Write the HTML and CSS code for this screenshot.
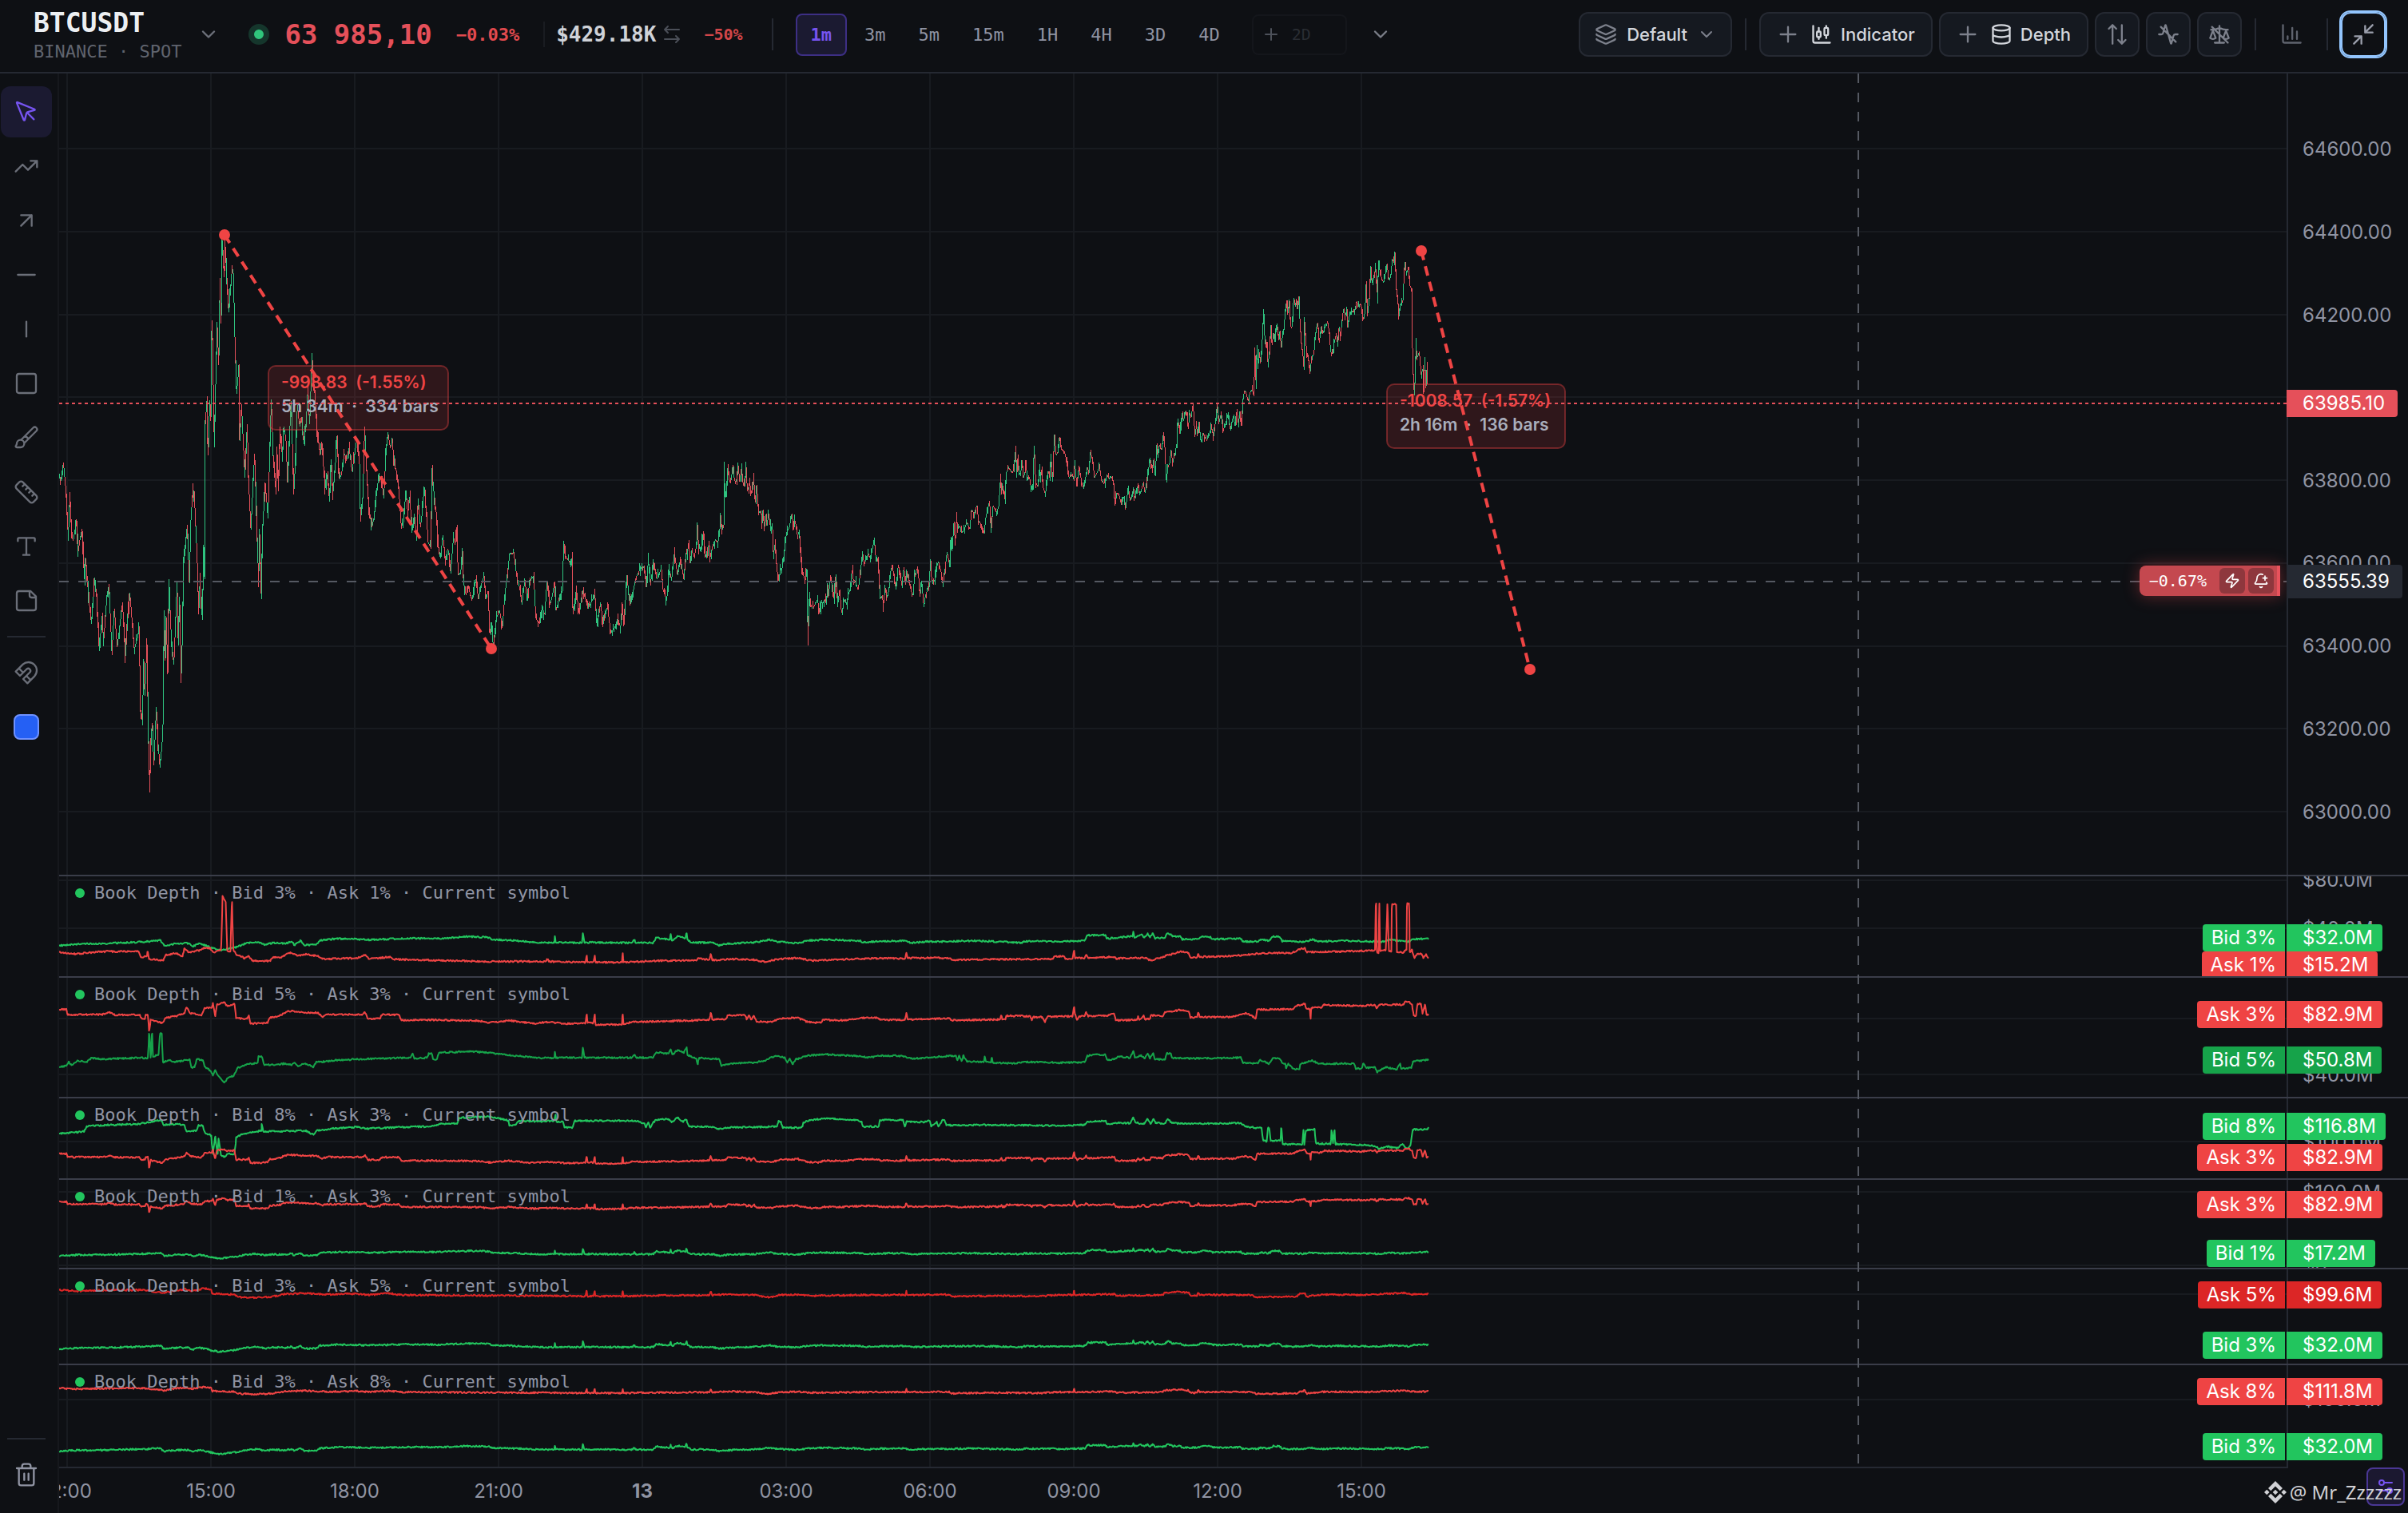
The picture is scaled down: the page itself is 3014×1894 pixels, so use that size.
FILE: index.html
```html
<!DOCTYPE html>
<html lang="en">
<head>
<meta charset="utf-8">
<meta name="viewport" content="width=device-width, initial-scale=1">
<title>BTCUSDT · Binance Spot</title>
<link rel="stylesheet" href="styles.css">
</head>
<body>
<div class="app">
  <header class="topbar">
    <button class="symbol" type="button">
      <span class="symbol-text"><span class="symbol-name">BTCUSDT</span><span class="symbol-venue">BINANCE · SPOT</span></span>
      <svg class="icon icon-md" viewBox="0 0 24 24"><path d="m6 9 6 6 6-6"/></svg>
    </button>
    <span class="live-dot"></span>
    <span class="price">63 985,10</span>
    <span class="change">−0.03%</span>
    <span class="divider divider-faint"></span>
    <span class="volume">$429.18K</span>
    <svg class="icon icon-sm swap" viewBox="0 0 24 24"><path d="m7 2-4 4 4 4M3 6h18M17 14l4 4-4 4M21 18H3"/></svg>
    <span class="change-small">−50%</span>
    <span class="divider"></span>
    <nav class="timeframes" aria-label="Timeframe">
      <button class="tf tf-active" type="button">1m</button>
      <button class="tf" type="button">3m</button>
      <button class="tf" type="button">5m</button>
      <button class="tf" type="button">15m</button>
      <button class="tf" type="button">1H</button>
      <button class="tf" type="button">4H</button>
      <button class="tf" type="button">3D</button>
      <button class="tf" type="button">4D</button>
    </nav>
    <label class="tf-add">
      <svg class="icon icon-sm" viewBox="0 0 24 24"><path d="M5 12h14M12 5v14"/></svg>
      <input class="tf-input" type="text" placeholder="2D" aria-label="Custom timeframe">
    </label>
    <button class="bare" type="button" aria-label="More timeframes"><svg class="icon icon-md" viewBox="0 0 24 24"><path d="m6 9 6 6 6-6"/></svg></button>

    <div class="actions">
      <button class="btn btn-preset" type="button">
        <svg class="icon icon-md" viewBox="0 0 24 24"><path d="M12.83 2.18a2 2 0 0 0-1.66 0L2.6 6.08a1 1 0 0 0 0 1.83l8.58 3.91a2 2 0 0 0 1.66 0l8.58-3.9a1 1 0 0 0 0-1.83zM2 12a1 1 0 0 0 .58.91l8.6 3.91a2 2 0 0 0 1.65 0l8.58-3.9A1 1 0 0 0 22 12M2 17a1 1 0 0 0 .58.91l8.6 3.91a2 2 0 0 0 1.65 0l8.58-3.9A1 1 0 0 0 22 17"/></svg>
        <span>Default</span>
        <svg class="icon icon-sm" viewBox="0 0 24 24"><path d="m6 9 6 6 6-6"/></svg>
      </button>
      <span class="divider"></span>
      <button class="btn btn-wide" type="button">
        <svg class="icon icon-md icon-plus" viewBox="0 0 24 24"><path d="M4 12h16M12 4v16"/></svg>
        <svg class="icon icon-md icon-bright" viewBox="0 0 24 24"><path d="M9 5v4M9 15v2M17 3v2M17 13v3M3 3v16a2 2 0 0 0 2 2h16"/><rect x="7" y="9" width="4" height="6" rx="1"/><rect x="15" y="5" width="4" height="8" rx="1"/></svg>
        <span>Indicator</span>
      </button>
      <button class="btn btn-wide" type="button">
        <svg class="icon icon-md icon-plus" viewBox="0 0 24 24"><path d="M4 12h16M12 4v16"/></svg>
        <svg class="icon icon-md icon-bright" viewBox="0 0 24 24"><ellipse cx="12" cy="5" rx="9" ry="3"/><path d="M3 5v14a9 3 0 0 0 18 0V5M3 12a9 3 0 0 0 18 0"/></svg>
        <span>Depth</span>
      </button>
      <button class="btn btn-icon" type="button" aria-label="Sort panes"><svg class="icon icon-md" viewBox="0 0 24 24"><path d="m21 18-4 4-4-4M17 22V2M3 6l4-4 4 4M7 2v20"/></svg></button>
      <button class="btn btn-icon" type="button" aria-label="Activity off"><svg class="icon icon-md" viewBox="0 0 24 24"><path d="M22 12h-2.48a2 2 0 0 0-1.93 1.46l-2.35 8.36a.25.25 0 0 1-.48 0L9.24 2.18a.25.25 0 0 0-.48 0l-2.35 8.36A2 2 0 0 1 4.49 12H2M4 4l16 16"/></svg></button>
      <button class="btn btn-icon" type="button" aria-label="Balance off"><svg class="icon icon-md" viewBox="0 0 24 24"><path d="m16 16 3-8 3 8c-.87.65-1.92 1-3 1s-2.130-.35-3-1ZM2 16l3-8 3 8c-.87.65-1.92 1-3 1s-2.130-.35-3-1ZM7 21h10M12 3v18M3 7h2c2 0 5-1 7-2 2 1 5 2 7 2h2M4 4l17 17"/></svg></button>
      <span class="divider"></span>
      <button class="btn btn-icon btn-ghost" type="button" aria-label="Statistics"><svg class="icon icon-md icon-dim" viewBox="0 0 24 24"><path d="M3 2v17a2 2 0 0 0 2 2h17M18 17V9M13 17V5M8 17v-3"/></svg></button>
      <span class="divider"></span>
      <button class="btn btn-icon btn-focus" type="button" aria-label="Exit full screen"><svg class="icon icon-md" viewBox="0 0 24 24"><path d="m14 10 8-8M22 10h-8V3M2 22l8-8M3 14h7v8"/></svg></button>
    </div>
  </header>

  <div class="workspace">
    <aside class="tools" aria-label="Drawing tools">
      <button class="tool tool-active" type="button" aria-label="Cursor"><svg class="icon icon-lg" viewBox="0 0 24 24"><path d="M12.586 12.586 19 19M3.688 3.037a.497.497 0 0 0-.651.651l6.500 15.999a.501.501 0 0 0 .947-.062l1.569-6.083a2 2 0 0 1 1.448-1.479l6.124-1.579a.5.5 0 0 0 .063-.947z"/></svg></button>
      <button class="tool" type="button" aria-label="Trend line"><svg class="icon icon-lg" viewBox="0 0 24 24"><path d="M16 7h6v6M22 7l-8.500 8.500-5-5L2 17"/></svg></button>
      <button class="tool" type="button" aria-label="Arrow"><svg class="icon icon-lg" viewBox="0 0 24 24"><path d="M7 7h10v10M7 17 17 7"/></svg></button>
      <button class="tool" type="button" aria-label="Horizontal line"><svg class="icon icon-lg" viewBox="0 0 24 24"><path d="M4 12h16"/></svg></button>
      <button class="tool" type="button" aria-label="Vertical line"><svg class="icon icon-lg" viewBox="0 0 24 24"><path d="M12 5v14"/></svg></button>
      <button class="tool" type="button" aria-label="Rectangle"><svg class="icon icon-lg" viewBox="0 0 24 24"><rect x="3" y="3" width="18" height="18" rx="2"/></svg></button>
      <button class="tool" type="button" aria-label="Brush"><svg class="icon icon-lg" viewBox="0 0 24 24"><path d="m11 10 3 3M6.500 21A3.500 3.500 0 1 0 3 17.500a2.620 2.620 0 0 1-.708 1.792A1 1 0 0 0 3 21zM9.969 17.031 21.378 5.624a1 1 0 0 0-3.002-3.002L6.967 14.031"/></svg></button>
      <button class="tool" type="button" aria-label="Ruler"><svg class="icon icon-lg" viewBox="0 0 24 24"><path d="M21.300 15.300a2.400 2.400 0 0 1 0 3.400l-2.600 2.600a2.400 2.400 0 0 1-3.400 0L2.700 8.700a2.410 2.410 0 0 1 0-3.400l2.600-2.600a2.410 2.410 0 0 1 3.400 0ZM14.500 12.500l2-2M11.500 9.500l2-2M8.500 6.500l2-2M17.500 15.500l2-2"/></svg></button>
      <button class="tool" type="button" aria-label="Text"><svg class="icon icon-lg" viewBox="0 0 24 24"><path d="M12 4v16M4 7V5a1 1 0 0 1 1-1h14a1 1 0 0 1 1 1v2M9 20h6"/></svg></button>
      <button class="tool" type="button" aria-label="Note"><svg class="icon icon-lg" viewBox="0 0 24 24"><path d="M16 3H5a2 2 0 0 0-2 2v14a2 2 0 0 0 2 2h14a2 2 0 0 0 2-2V8ZM15 3v4a2 2 0 0 0 2 2h4"/></svg></button>
      <hr class="tool-rule">
      <button class="tool" type="button" aria-label="Magnet"><svg class="icon icon-lg" viewBox="0 0 24 24"><path d="m6 15-4-4 6.750-6.770a7.790 7.790 0 0 1 11 11L13 22l-4-4 6.390-6.360a2.140 2.140 0 0 0-3-3L6 15M5 8l4 4M12 15l4 4"/></svg></button>
      <button class="tool" type="button" aria-label="Colour"><span class="swatch"></span></button>
      <span class="spacer"></span>
      <hr class="tool-rule">
      <button class="tool tool-trash" type="button" aria-label="Delete drawings"><svg class="icon icon-lg" viewBox="0 0 24 24"><path d="M3 6h18M19 6v14a2 2 0 0 1-2 2H7a2 2 0 0 1-2-2V6M8 6V4a2 2 0 0 1 2-2h4a2 2 0 0 1 2 2v2M10 11v6M14 11v6"/></svg></button>
    </aside>

    <main class="chart">
      <section class="pane pane-main">
        <div class="plot">
          <svg class="canvas" data-pane="main"></svg>
          <div class="order-pill" style="--y:635px">
            <span class="order-pct">−0.67%</span>
            <button class="order-btn" type="button" aria-label="Quick order"><svg class="icon icon-xs" viewBox="0 0 24 24"><path d="M4 14a1 1 0 0 1-.780-1.630l9.900-10.200a.5.5 0 0 1 .860.460l-1.920 6.020A1 1 0 0 0 13 10h7a1 1 0 0 1 .780 1.630l-9.900 10.200a.5.5 0 0 1-.860-.460l1.920-6.020A1 1 0 0 0 11 14z"/></svg></button>
            <button class="order-btn" type="button" aria-label="Add alert"><svg class="icon icon-xs" viewBox="0 0 24 24"><path d="M10.268 21a2 2 0 0 0 3.464 0M15 8h6M18 5v6M20.002 14.464a9 9 0 0 0 .738.863A1 1 0 0 1 20 17H4a1 1 0 0 1-.740-1.673C4.590 13.956 6 12.499 6 8a6 6 0 0 1 8.750-5.332"/></svg></button>
          </div>
        </div>
        <div class="scale">
          <span class="tick" style="--y:95px">64600.00</span>
          <span class="tick" style="--y:199px">64400.00</span>
          <span class="tick" style="--y:303px">64200.00</span>
          <span class="tick" style="--y:510px">63800.00</span>
          <span class="tick" style="--y:613px">63600.00</span>
          <span class="tick" style="--y:717px">63400.00</span>
          <span class="tick" style="--y:821px">63200.00</span>
          <span class="tick" style="--y:925px">63000.00</span>
          <span class="tag tag-last" style="--y:413px">63985.10</span>
          <span class="tag tag-cross" style="--y:636px">63555.39</span>
        </div>
      </section>

      <section class="pane" style="height:127px">
        <div class="plot"><svg class="canvas" data-pane="0"></svg>
          <h2 class="legend">Book Depth · Bid 3% · Ask 1% · Current symbol</h2>
          <span class="name ask" style="--y:111px">Ask 1%</span>
          <span class="name bid" style="--y:77px">Bid 3%</span>
        </div>
        <div class="scale">
          <span class="tick" style="--y:5px">$80.0M</span>
          <span class="tick" style="--y:66px">$40.0M</span>
          <span class="tag ask" style="--y:111px">$15.2M</span>
          <span class="tag bid" style="--y:77px">$32.0M</span>
        </div>
      </section>
      <section class="pane" style="height:151px">
        <div class="plot"><svg class="canvas" data-pane="1"></svg>
          <h2 class="legend">Book Depth · Bid 5% · Ask 3% · Current symbol</h2>
          <span class="name ask" style="--y:46px">Ask 3%</span>
          <span class="name bid-deep" style="--y:103px">Bid 5%</span>
        </div>
        <div class="scale">
          <span class="tick" style="--y:122px">$40.0M</span>
          <span class="tag ask" style="--y:46px">$82.9M</span>
          <span class="tag bid-deep" style="--y:103px">$50.8M</span>
        </div>
      </section>
      <section class="pane" style="height:102px">
        <div class="plot"><svg class="canvas" data-pane="2"></svg>
          <h2 class="legend">Book Depth · Bid 8% · Ask 3% · Current symbol</h2>
          <span class="name bid" style="--y:35px">Bid 8%</span>
          <span class="name ask" style="--y:74px">Ask 3%</span>
        </div>
        <div class="scale">
          <span class="tick" style="--y:55px">$100.0M</span>
          <span class="tag bid" style="--y:35px">$116.8M</span>
          <span class="tag ask" style="--y:74px">$82.9M</span>
        </div>
      </section>
      <section class="pane" style="height:112px">
        <div class="plot"><svg class="canvas" data-pane="3"></svg>
          <h2 class="legend">Book Depth · Bid 1% · Ask 3% · Current symbol</h2>
          <span class="name ask" style="--y:31px">Ask 3%</span>
          <span class="name bid" style="--y:92px">Bid 1%</span>
        </div>
        <div class="scale">
          <span class="tick" style="--y:16px">$100.0M</span>
          <span class="tick" style="--y:107px">$0</span>
          <span class="tag ask" style="--y:31px">$82.9M</span>
          <span class="tag bid" style="--y:92px">$17.2M</span>
        </div>
      </section>
      <section class="pane" style="height:120px">
        <div class="plot"><svg class="canvas" data-pane="4"></svg>
          <h2 class="legend">Book Depth · Bid 3% · Ask 5% · Current symbol</h2>
          <span class="name ask-deep" style="--y:32px">Ask 5%</span>
          <span class="name bid" style="--y:95px">Bid 3%</span>
        </div>
        <div class="scale">
          <span class="tag ask-deep" style="--y:32px">$99.6M</span>
          <span class="tag bid" style="--y:95px">$32.0M</span>
        </div>
      </section>
      <section class="pane" style="height:129px">
        <div class="plot"><svg class="canvas" data-pane="5"></svg>
          <h2 class="legend">Book Depth · Bid 3% · Ask 8% · Current symbol</h2>
          <span class="name ask" style="--y:33px">Ask 8%</span>
          <span class="name bid" style="--y:102px">Bid 3%</span>
        </div>
        <div class="scale">
          <span class="tick" style="--y:43px">$100.0M</span>
          <span class="tag ask" style="--y:33px">$111.8M</span>
          <span class="tag bid" style="--y:102px">$32.0M</span>
        </div>
      </section>

      <footer class="timeline">
        <div class="times">
          <span>12:00</span><span>15:00</span><span>18:00</span><span>21:00</span><strong>13</strong><span>03:00</span><span>06:00</span><span>09:00</span><span>12:00</span><span>15:00</span>
        </div>
        <button class="settings" type="button" aria-label="Chart settings"><svg class="icon icon-sm" viewBox="0 0 24 24"><path d="M14 17H4M20 7h-9"/><circle cx="17" cy="17" r="3"/><circle cx="7" cy="7" r="3"/></svg></button>
        <div class="credit">
          <svg class="credit-logo" viewBox="0 0 28 28"><path d="M14 0l9 9-3.300 3.300L14 6.600l-5.700 5.700L5 9zM3.300 10.700L6.600 14l-3.300 3.300L0 14zM14 10.700l3.300 3.300-3.300 3.300-3.300-3.300zM24.700 10.700L28 14l-3.300 3.300-3.300-3.300zM8.300 15.700l5.700 5.700 5.700-5.700L23 19l-9 9-9-9z"/></svg>
          <span>@ Mr_Zzzzzz</span>
        </div>
      </footer>
      <div class="cross-v"></div>
    </main>
  </div>
</div>
<script src="chart.js"></script>
</body>
</html>
```
FILE: styles.css
```css
:root {
  --bg: #0e1014;
  --line: #252932;
  --line-strong: #3a3d49;
  --text: #9094a3;
  --red: #e5505a;
  --accent: #7654f0;
  --mono: "DejaVu Sans Mono", monospace;
  --sans: Inter, "Liberation Sans", sans-serif;
}

* { box-sizing: border-box; }

body {
  margin: 0;
  background: var(--bg);
  color: var(--text);
  font-family: var(--sans);
  font-size: 22px;
}

button {
  padding: 0;
  border: 0;
  background: none;
  color: inherit;
  font: inherit;
}

.app {
  display: flex;
  flex-direction: column;
  height: 100vh;
  overflow: hidden;
}

/* icons */
.icon {
  flex: none;
  fill: none;
  stroke: currentColor;
  stroke-width: 2;
  stroke-linecap: round;
  stroke-linejoin: round;
}
.icon-xs { width: 20px; height: 20px; }
.icon-sm { width: 24px; height: 24px; }
.icon-md { width: 28px; height: 28px; }
.icon-lg { width: 32px; height: 32px; }
.icon-plus { margin-right: 4px; }
.icon-bright { color: #d3d6dc; }
.icon-dim { color: #5f636e; }

/* top bar */
.topbar {
  display: flex;
  align-items: center;
  flex: none;
  height: 92px;
  padding: 0 28px 4px 42px;
  border-bottom: 2px solid var(--line);
  font-family: var(--mono);
  white-space: nowrap;
}
.symbol {
  display: flex;
  align-items: center;
  gap: 20px;
  color: #6c707a;
  text-align: left;
}
.symbol-text { display: flex; flex-direction: column; padding-top: 8px; }
.symbol-name {
  color: #eceff2;
  font-size: 33px;
  font-weight: 700;
  line-height: 36px;
}
.symbol-venue { font-size: 22px; line-height: 36px; color: #60646e; }
.live-dot {
  width: 26px;
  height: 26px;
  margin: 0 19px 0 36px;
  border: 7px solid #15362c;
  border-radius: 50%;
  background: #30c67c;
}
.price { color: var(--red); font-size: 34px; font-weight: 700; }
.change { margin: 0 30px; color: #e24a4e; font-size: 22px; font-weight: 700; }
.divider {
  flex: none;
  width: 2px;
  height: 40px;
  background: var(--line);
}
.divider-faint { height: 32px; background: #191c21; }
.volume { margin: 0 8px 0 14px; color: #cfd2d8; font-size: 26px; font-weight: 700; }
.swap { color: #4b4f58; }
.change-small { margin: 0 36px 0 28px; color: #d34649; font-size: 20px; font-weight: 700; }
.timeframes { display: flex; gap: 3px; margin-left: 28px; }
.tf {
  height: 53px;
  padding: 0 17px;
  border: 2px solid transparent;
  border-radius: 8px;
  color: var(--text);
  font-size: 22px;
}
.tf-active {
  border-color: #3d2f85;
  background: #1b1a31;
  color: #7654f0;
  font-weight: 700;
}
.tf-add {
  display: flex;
  align-items: center;
  gap: 14px;
  width: 119px;
  height: 51px;
  margin-left: 21px;
  padding-left: 10px;
  border: 2px solid #14161b;
  border-radius: 8px;
  color: #4d515a;
}
.tf-input {
  width: 60px;
  padding: 0;
  border: 0;
  background: none;
  color: #9094a3;
  font: 20px var(--mono);
}
.tf-input::placeholder { color: #2a2d33; opacity: 1; }
.bare { margin-left: 28px; color: #7a7e88; line-height: 0; }

.actions {
  display: flex;
  align-items: center;
  gap: 8px;
  margin-left: auto;
  font-family: var(--sans);
}
.actions .divider { margin: 0 8px; }
.btn {
  display: flex;
  align-items: center;
  justify-content: center;
  gap: 10px;
  height: 56px;
  padding: 0 18px;
  border: 2px solid var(--line);
  border-radius: 12px;
  background: #151920;
  color: #7d818c;
  font-size: 22px;
  font-weight: 500;
}
.btn span { color: #d3d6dc; }
.btn-preset { gap: 12px; }
.btn-wide { padding: 0 20px; }
.btn-icon { width: 56px; padding: 0; }
.btn-ghost { border-color: transparent; background: none; }
.btn-focus {
  border: 2px solid #93c5fd;
  outline: 2px solid #93c5fd;
  background: var(--bg);
  color: #9a9eab;
}

/* left tool rail */
.workspace { display: flex; flex: 1; min-height: 0; }
.tools {
  display: flex;
  flex-direction: column;
  align-items: center;
  flex: none;
  gap: 4px;
  width: 74px;
  padding: 16px 6px 16px 0;
  border-right: 2px solid #16181d;
}
.tool {
  display: flex;
  align-items: center;
  justify-content: center;
  flex: none;
  width: 64px;
  height: 64px;
  border-radius: 12px;
  color: #6b6f79;
}
.tool .icon { stroke-width: 1.75; }
.tool-active { background: #1b1a31; color: var(--accent); }
.tool-trash { color: #9094a3; }
.tool-rule {
  flex: none;
  width: 48px;
  height: 2px;
  margin: 8px 0;
  border: 0;
  background: var(--line);
}
.swatch {
  width: 32px;
  height: 32px;
  border: 2px solid #6f92ff;
  border-radius: 8px;
  background: #2560f4;
}
.spacer { flex: 1; }

/* chart panes */
.chart {
  position: relative;
  display: flex;
  flex-direction: column;
  flex: 1;
  min-width: 0;
}
.pane {
  display: flex;
  flex: none;
  overflow: hidden;
  border-top: 2px solid var(--line-strong);
}
.pane-main { flex: 1; min-height: 0; border-top: 0; }
.plot { position: relative; flex: 1; min-width: 0; overflow: hidden; }
.scale {
  position: relative;
  flex: none;
  width: 152px;
  border-left: 2px solid var(--line);
  font-size: 24px;
}
.canvas { position: absolute; inset: 0; width: 100%; height: 100%; }
.legend {
  position: absolute;
  top: 7px;
  left: 20px;
  display: flex;
  align-items: center;
  gap: 12px;
  margin: 0;
  color: var(--text);
  font: 22px/28px var(--mono);
}
.legend::before {
  content: "";
  width: 12px;
  height: 12px;
  border-radius: 50%;
  background: #22c55e;
}
.tick, .tag, .name {
  position: absolute;
  top: var(--y);
  height: 34px;
  line-height: 34px;
  transform: translateY(-50%);
  font-size: 24px;
  white-space: nowrap;
}
.tick { left: 18px; }
.tag { left: -2px; padding: 0 12px 0 20px; border-radius: 0 4px 4px 0; color: #fff; }
.name { right: 2px; padding: 0 11px; border-radius: 4px 0 0 4px; color: #fff; }
.bid { background: #22c55e; }
.bid-deep { background: #16a34a; }
.ask { background: #ef4444; }
.ask-deep { background: #dc2626; }
.tag-last { padding-right: 16px; background: var(--red); }
.tag-cross { left: 0; height: 42px; padding: 0 16px 0 18px; line-height: 42px; background: #252932; }

.order-pill {
  position: absolute;
  top: var(--y);
  right: 8px;
  display: flex;
  align-items: center;
  gap: 4px;
  height: 38px;
  padding: 0 4px 0 12px;
  border-right: 4px solid #e8525c;
  border-radius: 8px 0 0 8px;
  background: #c4484f;
  box-shadow: 0 0 20px rgba(229, 72, 77, 0.4);
  transform: translateY(-50%);
  color: #fff;
}
.order-pct { margin-right: 12px; font: 20px var(--mono); }
.order-btn {
  display: flex;
  align-items: center;
  justify-content: center;
  width: 32px;
  height: 32px;
  border-radius: 6px;
  background: #8e373d;
}
.cross-v {
  position: absolute;
  top: 0;
  bottom: 58px;
  right: 687px;
  width: 2px;
  background: repeating-linear-gradient(#555962 0 12px, transparent 12px 24px);
}

/* time axis */
.timeline { position: relative; flex: none; height: 58px; }
.times {
  display: flex;
  height: 58px;
  margin-right: 150px;
  overflow: hidden;
  border-top: 2px solid var(--line);
  font-size: 24px;
  line-height: 58px;
}
.times > * { flex: none; width: 180px; text-align: center; }
.times > :first-child { margin-left: -80px; }
.settings {
  position: absolute;
  top: 1px;
  right: 4px;
  display: flex;
  align-items: center;
  justify-content: center;
  width: 48px;
  height: 48px;
  border: 2px solid #4a3794;
  border-radius: 8px;
  background: #1b1830;
  color: #7654f0;
}
.credit {
  position: absolute;
  top: 16px;
  right: 8px;
  display: flex;
  align-items: center;
  gap: 4px;
  color: #d0d1d5;
  font: 24px/32px "Noto Sans", sans-serif;
}
.credit-logo { width: 28px; height: 28px; fill: currentColor; }

/* chart drawing */
.grid { fill: #181b20; }
.last-line { stroke: #e5505a; stroke-width: 2; stroke-dasharray: 4 4; }
.cross-h { stroke: #555962; stroke-width: 2; stroke-dasharray: 12 12; }
.candle-up { stroke: #2fc480; }
.candle-down { stroke: #e5505a; }
.candle-up, .candle-down { fill: none; shape-rendering: crispEdges; }
.series { fill: none; stroke-width: 2; stroke-linejoin: round; }
.series-bid { stroke: #22c55e; }
.series-bid-deep { stroke: #16a34a; }
.series-ask { stroke: #ef4444; }
.series-ask-deep { stroke: #dc2626; }
.trend { stroke: #ef4444; stroke-width: 4; stroke-dasharray: 12 8; }
.trend-dot { fill: #ef4444; }
.measure-box { fill: #ef4444; fill-opacity: 0.15; stroke: #ef4444; stroke-opacity: 0.4; stroke-width: 2; }
.measure-text { font-size: 21px; font-weight: 600; white-space: pre; }
.measure-delta { fill: #ef4444; }
.measure-span { fill: #a9aebc; }
```
FILE: chart.js
```js
// Draws the price pane and the book depth panes.
// One minute is one pixel wide; three hours separate the vertical grid lines.
const NS = 'http://www.w3.org/2000/svg';
const GRID_X = [9, 189, 369, 549, 729, 909, 1089, 1269, 1449, 1629];

let seed = 7;
const rnd = () => (seed = (seed * 16807) % 2147483647) / 2147483647;

function add(parent, tag, attrs, text) {
  const el = document.createElementNS(NS, tag);
  for (const k in attrs) el.setAttribute(k, attrs[k]);
  if (text) el.textContent = text;
  parent.appendChild(el);
  return el;
}

function parse(str, x0, y0, sx, sy) {
  return str.trim().split(/[;\s]+/).filter(Boolean).map(p => {
    const [x, y] = p.split(',').map(Number);
    return [x0 + x / sx, y0 + y / sy];
  });
}

// Value of a broken line at each whole x, with the turning points in between
// attached to the minute that they fall in.
function sample(points) {
  const out = [];
  let i = 0;
  for (let x = Math.ceil(points[0][0]); x <= points[points.length - 1][0]; x++) {
    const passed = [];
    while (i < points.length - 2 && points[i + 1][0] < x) {
      i++;
      passed.push(points[i][1]);
    }
    const [ax, ay] = points[i], [bx, by] = points[i + 1];
    const t = bx > ax ? (x - ax) / (bx - ax) : 1;
    out.push({ x, y: ay + (by - ay) * Math.min(1, Math.max(0, t)), passed });
  }
  return out;
}

function grid(svg, rows) {
  GRID_X.forEach(x => add(svg, 'rect', { class: 'grid', x, y: 0, width: 2, height: '100%' }));
  rows.forEach(y => add(svg, 'rect', { class: 'grid', x: 0, y: y - 1, width: '100%', height: 2 }));
}

const PRICE_A = `27,685;32,705;38,658;45,740;50,855;54,735;58,845;62,860;70,812;74,890;78,860;84,830;90,960;93,905;100,1010;107,1075;115,955;120,1010;126,1140;134,1045;136,1130;145,1000;150,975;157,1150;163,1035;170,1135;176,1085;183,1020;190,1160;196,1060;201,995;212,1140;220,1110;224,1080;227,1300;232,1325;235,1165;238,1260;243,1125;247,1380;250,1510;252,1380;256,1330;260,1440;266,1290;270,1380;275,1445;282,1360;285,1050;288,1170;290,1055;294,1200;297,965;303,1120;309,1180;317,965;320,1130;323,1005;327,1215;330,1105;333,920;338,860;342,820;347,970;351,800;356,725;360,760;366,900;370,1045;373,960;379,1065;382,870;385,960;386,560;390,500;393,640;397,500;400,540;401,360;403,290;408,600;413,400;415,295;419,400;422,200;425,300;427,80;433,180;434,80;440,200;444,270;448,210;452,155;455,170;459,350;463,480;469,405;470,600;475,510;483,690;489,560;492,700;498,830;507,635;512,800;517,970;519,830;524,1010;526,845;533,710;540,800;545,600;548,495;553,650;560,740;562,620;565,715;570,580;575,640;579,565;584,600;588,710;592,600;597,500;603,740;608,640;612,510;617,560;622,540;628,610;634,550;638,460;642,560;646,440;648,375;652,470;655,480;660,570;668,640;672,605;680,725;686,690;691,760;695,650;699,740;705,670;709,590;714,700;720,690;727,635;733,650;739,620;746,680;752,640;758,595;764,640;767,810;773,740;777,565;782,680;788,780;795,825;800,800;806,740;812,690;818,700;824,750;829,640;834,580;840,620;845,600;849,660;855,680;861,730;867,825;873,810;878,730;883,790;888,745;893,840;899,790;905,860;908,750;914,825;919,780;923,720;928,780;933,865;940,880;942,672;948,750;953,790;957,870;963,905;969,845;975,910;981,880;989,930;995,850;999,870;1004,820;1006,950;1013,940;1017,880;1020,970;1026,1000;1031,975;1040,1015;1050,960;1056,1010;1063,975;1070,950;1075,1010;1080,990;1084,1100;1088,1070;1093,1140;1100,1060;1108,1040;1115,1085;1121,1000;1127,950;1133,892;1143,892;1150,950;1158,985;1163,1025;1170,960;1176,1015;1182,965;1192,950;1197,1060;1207,1075;1213,1035;1219,1050;1224,970;1232,1025;1238,1000;1243,965;1247,1040;1256,1000;1263,990;1265,860;1270,900;1280,915;1286,905;1288,1050;1296,990;1303,1045;1313,988;1325,1035;1342,1000;1347,1080;1356,1020;1362,1075;1373,1030;1381,1100;1392,1080;1398,1060;1405,1085;1409,1020;1413,1080;1421,950;1426,1015;1436,990;1443,955;1455,930;1463,925;1468,980;1473,910;1478,970;1487,915;1494,960;1505,930;1509,985;1518,1015;1524,935;1530,960;1537,892;1545,950;1552,905;1560,960;1566,895`;
const PRICE_B = `0,583;5,535;9,615;13,568;20,590;27,545;28,462;33,560;40,555;46,495;51,580;55,598;62,535;65,590;72,550;80,525;86,540;91,505;94,435;98,490;103,480;104,242;106,355;109,370;115,242;118,300;122,315;129,250;133,305;138,310;143,245;148,310;152,262;158,325;163,295;166,258;169,345;176,315;181,355;187,300;192,388;195,320;201,420;208,420;210,470;214,425;218,478;222,430;224,475;229,428;235,495;239,465;242,575;248,550;252,640;257,682;263,635;267,632;272,580;279,500;287,480;294,428;299,490;303,455;310,515;315,490;319,600;325,655;331,680;334,645;337,675;339,898;341,835;344,735;348,780;355,780;360,765;366,750;371,805;376,765;388,755;391,770;394,690;396,745;401,685;407,690;412,745;418,665;423,765;428,715;432,790;436,795;440,750;447,770;452,735;457,715;461,655;464,640;467,695;471,680;480,715;485,660;492,575;497,620;502,600;508,578;513,595;521,555;525,520;529,590;536,600;541,745;548,735;550,780;555,710;561,745;567,705;572,632;578,645;586,715;592,622;598,655;602,700;608,630;613,690;617,645;625,700;630,725;635,735;637,660;645,637;650,675;653,740;658,685;664,780;668,740;674,715;679,690;683,600;686,680;695,680;698,635;705,608;711,640;718,690;722,655;729,572;737,630;740,515;744,560;748,465;752,540;756,430;758,490;765,475;770,500;777,490;784,462;793,485;798,415;805,430;813,398;817,455;825,470;833,500;838,440;848,382;853,490;858,400;868,425;874,400;879,292;882,345;885,325;892,378;895,275;902,258;910,270;915,270;918,240;922,175;924,295;928,208;931,285;936,270;939,228;943,295;948,270;950,228;954,305;960,290;965,340;970,330;973,175;975,240;978,315;984,325;988,260;991,300;995,258;998,330;1005,358;1009,290;1015,270;1018,305;1020,205;1025,310;1030,133;1035,208;1041,195;1044,140;1050,185;1058,195;1066,240;1069,290;1075,290;1080,280;1084,300;1087,235;1093,328;1099,248;1106,310;1111,330;1118,290;1122,255;1127,275;1131,198;1138,235;1142,295;1150,275;1156,253;1163,310;1172,315;1178,283;1184,300;1190,290;1196,315;1199,388;1204,350;1210,355;1218,395;1225,365;1229,415;1236,340;1243,380;1250,345;1256,370;1264,322;1269,360;1279,315;1284,350;1290,310;1294,260;1299,228;1304,260;1308,228;1313,270;1318,165;1320,220;1324,172;1331,190;1335,135;1338,140;1344,303;1349,250;1353,240;1357,190;1361,235;1368,205;1374,160;1376,72;1382,130;1388,50;1392,80;1398,42;1403,62;1406,110;1408,45;1413,70;1419,15;1424,140;1428,98;1431,130;1436,100;1441,160;1447,125;1453,148;1459,150;1466,125;1470,100;1476,140;1482,80;1486,25;1492,85;1497,55;1503,115;1509,100;1516,58;1524,108;1531,65;1537,100;1542,45;1546,90;1551,45;1554,100`;
const PRICE_C = `408,590;412,565;417,570;424,600;430,572;437,560;443,585;446,420;450,545;453,418;456,490;460,435;465,470;470,400;475,290;479,400;483,420;486,400;489,478;494,430;499,342;502,410;507,370;511,400;515,350;520,350;524,395;528,375;533,420;537,370;541,360;546,290;550,262;554,300;559,265;563,350;568,350;573,252;578,280;582,255;587,290;590,245;593,320;598,400;603,440;607,490;608,320;612,380;615,430;621,460;627,500;632,450;639,440;645,370;648,350;652,335;657,400;663,350;670,370;674,350;680,345;684,330;690,375;694,435;701,440;706,400;712,375;716,400;722,350;726,385;731,330;736,290;741,310;747,295;750,340;756,310;765,295;772,300;779,262;785,280;790,270;797,290;800,325;806,300;810,205;815,305;821,250;825,152;829,200;835,185;841,147;848,255;850,125;855,160;862,190;867,200;873,170;879,140;884,190;890,180;896,120;901,130;905,98;908,210;914,265;917,315;923,270;930,265;933,200;937,130;942,170;949,145;954,215;960,220;961,400;965,540;968,575;971,500;973,400;976,455;984,435;990,510;996,490;998,575;1002,465;1006,550;1010,480;1013,600`;

function drawPrice(svg) {
  const points = [
    ...parse(PRICE_A, -14, 168, 1.96, 2.063),
    ...parse(PRICE_B, 786, 408, 2.24, 3),
    ...parse(PRICE_C, 1326, 188, 2.613, 2.703)
  ];
  const path = { up: '', down: '' };
  const values = sample(points);
  for (let i = 1; i < values.length; i++) {
    const { x, y: close, passed } = values[i], open = values[i - 1].y;
    const noise = x < 1000 ? 9 : 6;
    const rising = rnd() < 0.2 ? close > open : close <= open;
    const top = Math.min(open, close, ...passed) - (rnd() < 0.4 ? rnd() * noise : 0);
    const bottom = Math.max(open, close, ...passed) + (rnd() < 0.4 ? rnd() * noise : 0);
    const y = Math.round(top), h = Math.max(2, Math.round(bottom) - y);
    path[rising ? 'up' : 'down'] += `M${x - 0.5} ${y}v${h}`;
  }
  add(svg, 'path', { class: 'candle-up', d: path.up });
  add(svg, 'path', { class: 'candle-down', d: path.down });
}

function measure(svg, m) {
  add(svg, 'rect', { class: 'measure-box', x: m.x, y: m.y, width: m.w, height: 80, rx: 9 });
  add(svg, 'text', { class: 'measure-text measure-delta', x: m.x + 16, y: m.y + 28 }, m.delta);
  add(svg, 'text', { class: 'measure-text measure-span', x: m.x + 16, y: m.y + 58 }, m.span);
}

function trend(svg, x1, y1, x2, y2) {
  add(svg, 'line', { class: 'trend', x1, y1, x2, y2 });
  add(svg, 'circle', { class: 'trend-dot', cx: x1, cy: y1, r: 7 });
  add(svg, 'circle', { class: 'trend-dot', cx: x2, cy: y2, r: 7 });
}

const main = document.querySelector('[data-pane="main"]');
grid(main, [94, 198, 302, 405, 509, 613, 717, 820, 924]);
drawPrice(main);
measure(main, { x: 262, y: 366, w: 225, delta: '-998.83  (-1.55%)', span: '5h 34m  ·  334 bars' });
measure(main, { x: 1662, y: 389, w: 223, delta: '-1008.57  (-1.57%)', span: '2h 16m  ·  136 bars' });
add(main, 'line', { class: 'cross-h', x1: 0, x2: '100%', y1: 636, y2: 636 });
add(main, 'line', { class: 'last-line', x1: 0, x2: '100%', y1: 413, y2: 413 });
trend(main, 207, 202, 541, 720);
trend(main, 1705, 222, 1841, 746);

// Depth series: a first stretch and a second one, each with its own x scale.
const DEPTH = {
  bid3: [`116,200;150,196;200,195;240,193;290,190;315,187;322,200;345,195;370,194;378,202;390,195;400,198;415,205;430,211;445,208;465,203;480,195;505,191;520,198;535,193;560,195;572,190;578,198;590,188;597,198;620,198;628,187;660,183;700,184;720,186;800,182;860,183;920,178;960,180;965,185;1000,187;1060,193;1088,193;1089,177;1091,192;1142,193;1144,170;1147,192;1240,193;1245,186;1248,193;1282,193;1288,180;1300,183;1314,185;1316,172;1319,188;1330,177;1345,182;1347,170;1350,185;1356,192;1400,193;1410,199;1430,195;1480,192;1510,186;1525,190;1567,194`,
    `0,193;20,188;60,185;140,188;150,192;190,189;240,188;260,193;300,190;330,190;400,188;480,191;515,193;520,189;600,190;660,188;666,175;708,174;711,183;730,181;760,178;770,178;772,166;775,180;790,173;798,180;805,170;810,180;817,170;822,182;845,180;850,171;858,172;862,178;880,178;885,185;920,184;930,178;950,179;955,184;1020,183;1025,190;1060,190;1065,185;1085,188;1095,178;1110,179;1116,189;1165,191;1185,185;1200,190;1250,188;1330,190;1345,191;1360,186;1410,190;1418,184;1454,183`],
  ask1: [`116,216;150,220;200,214;272,214;276,228;288,226;290,215;293,232;320,236;326,222;345,218;358,226;362,207;370,216;395,210;402,205;412,206;420,216;434,210;437,80;443,95;446,212;452,213;455,95;458,212;465,222;480,230;487,225;495,236;530,237;535,228;550,229;570,216;585,224;600,220;625,225;632,232;700,230;718,222;724,232;765,227;775,233;850,235;950,238;1070,238;1074,232;1078,238;1149,240;1151,224;1153,240;1165,238;1167,224;1169,240;1220,240;1222,218;1224,240;1300,236;1366,236;1370,230;1392,234;1395,220;1398,235;1440,232;1480,234;1500,239;1530,232;1567,230`,
    `0,230;30,236;100,233;180,230;245,231;248,217;251,230;300,229;350,230;354,234;450,233;585,232;590,226;612,226;616,232;632,231;635,212;638,229;660,230;663,222;668,229;728,227;733,231;800,229;812,236;840,227;880,214;900,217;904,229;919,228;922,220;925,227;1000,225;1030,222;1060,219;1140,217;1155,208;1168,206;1172,215;1250,214;1320,212;1330,210;1332,98;1334,214;1338,218;1340,98;1342,212;1355,210;1359,100;1362,212;1367,214;1369,100;1379,101;1381,216;1396,216;1402,210;1404,97;1409,98;1411,215;1415,210;1421,230;1428,220;1438,220;1442,230;1448,222;1454,231`],
  ask3: [`116,354;130,353;133,366;200,366;215,360;225,367;274,367;278,376;284,376;286,366;290,366;293,405;296,378;318,387;325,374;345,370;362,362;366,349;374,363;395,368;402,350;415,350;418,338;422,370;426,342;440,337;446,345;460,341;464,375;485,376;488,368;492,388;525,386;530,374;550,368;565,357;600,361;625,362;632,372;640,366;710,366;716,360;722,376;745,376;750,366;783,367;788,380;850,379;940,381;960,386;1000,380;1048,388;1072,384;1110,388;1149,388;1151,366;1154,386;1165,386;1167,366;1169,390;1220,390;1222,366;1224,389;1240,384;1300,382;1366,380;1392,378;1395,362;1398,378;1425,377;1428,368;1462,368;1466,378;1470,368;1474,378;1480,369;1485,383;1515,384;1530,376;1567,373`,
    `0,375;20,384;50,386;55,379;100,380;150,374;180,374;188,379;245,379;248,362;251,378;300,377;345,375;354,380;400,379;464,378;467,369;470,378;476,378;479,369;534,370;538,380;541,372;562,372;568,383;574,371;632,370;635,348;638,366;642,378;646,371;660,370;663,360;668,370;715,368;728,364;732,380;780,379;783,370;786,378;796,368;799,378;810,376;813,368;840,370;845,361;880,355;900,359;904,374;919,372;922,362;926,372;1000,372;1030,363;1045,368;1055,376;1058,354;1140,353;1152,344;1168,340;1172,352;1180,353;1181,376;1183,350;1205,349;1212,343;1300,345;1330,342;1334,350;1340,342;1395,342;1400,335;1410,336;1415,342;1420,368;1425,368;1428,340;1436,340;1440,364;1446,342;1449,366;1454,367`],
  bid5: [`116,492;130,490;135,480;140,488;152,478;170,480;180,470;200,474;230,472;280,470;290,472;293,412;296,470;298,412;301,468;311,462;314,412;317,412;320,482;330,476;345,480;372,474;376,493;382,493;386,474;398,476;402,492;412,500;418,513;422,500;430,516;440,530;448,518;458,514;466,495;480,488;505,482;508,466;514,468;518,486;530,488;560,484;572,488;578,482;585,490;600,484;615,492;620,481;660,476;740,472;805,470;810,460;813,472;838,470;842,459;848,461;850,474;857,474;862,458;920,455;960,458;1000,464;1060,471;1088,470;1089,456;1091,470;1142,470;1144,446;1147,470;1240,470;1245,463;1250,470;1282,470;1288,457;1312,460;1316,450;1320,462;1330,451;1342,458;1347,445;1350,464;1366,472;1369,486;1372,470;1395,474;1405,472;1412,475;1416,489;1440,484;1480,482;1500,477;1520,466;1540,470;1545,482;1550,472;1556,486;1562,472;1567,473`,
    `0,471;20,465;60,462;140,466;160,470;190,465;240,466;260,472;300,470;330,467;362,465;366,476;370,465;376,478;380,465;388,480;427,480;429,467;432,480;443,480;445,470;448,482;500,484;520,480;600,482;660,481;666,466;680,462;708,463;711,475;725,474;740,467;765,470;772,454;776,470;790,464;798,472;805,460;810,472;818,459;822,474;845,474;850,459;858,460;862,470;900,472;1020,470;1025,482;1060,484;1065,475;1085,484;1095,471;1110,473;1116,482;1123,484;1125,495;1130,484;1140,496;1155,498;1158,486;1185,476;1200,485;1282,484;1286,497;1300,495;1303,484;1310,495;1330,492;1335,505;1355,492;1380,499;1388,484;1390,495;1414,495;1418,479;1454,475`],
  bid8: [`116,653;150,650;165,648;170,635;220,632;270,630;290,626;315,620;322,632;345,630;362,632;366,648;385,646;390,632;398,635;402,650;414,658;418,702;422,660;427,702;429,665;434,705;440,710;446,702;460,702;464,662;475,655;505,648;513,645;514,630;517,648;560,647;600,646;615,656;622,646;660,640;700,637;720,641;800,637;845,636;862,630;898,628;901,615;960,612;990,619;998,622;1000,634;1012,632;1018,622;1060,624;1088,622;1090,607;1092,624;1105,624;1108,638;1124,638;1128,622;1245,622;1265,628;1268,638;1272,626;1276,638;1282,626;1288,620;1312,618;1318,626;1330,614;1340,624;1347,620;1352,636;1400,637;1410,641;1440,638;1500,637;1525,636;1528,622;1532,624;1536,638;1567,639`,
    `0,639;8,636;10,626;25,620;60,617;130,620;144,624;148,636;184,636;187,620;240,621;245,636;248,624;290,625;302,622;306,636;318,624;322,636;332,620;337,622;341,633;450,632;520,633;600,634;660,632;666,624;708,622;711,630;740,627;765,628;772,614;778,627;798,629;805,618;812,629;818,618;824,628;845,628;852,618;860,627;880,629;1020,628;1030,636;1068,640;1072,670;1080,672;1083,638;1086,640;1089,670;1112,670;1114,640;1117,678;1162,680;1165,644;1167,680;1170,646;1190,642;1194,677;1228,678;1230,645;1233,676;1236,645;1239,678;1300,680;1330,683;1340,690;1360,684;1380,688;1394,678;1404,690;1412,680;1417,643;1450,643;1454,637`],
  ask5: [`116,1030;150,1033;200,1031;280,1030;322,1037;345,1032;365,1028;375,1033;402,1026;414,1030;417,1039;460,1041;468,1047;495,1048;530,1047;560,1040;600,1038;640,1041;700,1039;724,1042;765,1038;785,1042;900,1043;1072,1044;1149,1045;1151,1033;1153,1045;1165,1045;1167,1033;1169,1045;1220,1045;1222,1033;1224,1045;1300,1043;1392,1043;1395,1034;1398,1043;1425,1040;1480,1042;1510,1048;1530,1042;1567,1041`,
    `0,1041;30,1044;150,1042;246,1042;248,1032;250,1042;345,1041;354,1046;450,1044;560,1045;600,1042;633,1042;635,1032;637,1042;728,1040;735,1044;840,1042;845,1037;880,1034;900,1037;904,1044;919,1044;922,1037;925,1042;1000,1042;1045,1042;1055,1047;1150,1046;1155,1040;1168,1038;1172,1046;1212,1041;1300,1042;1400,1037;1415,1041;1454,1040`]
};

const X_SCALE = [1.568, 1.8447];
const X_START = [-74, 926];
const Y_SCALE = 1.926;

// top: pane offset; map: converts a recorded level to this pane's level.
function drawSeries(svg, name, cls, top, map = v => v) {
  let d = '';
  DEPTH[name].forEach((part, k) => {
    const pts = parse(part, X_START[k], 0, X_SCALE[k], 1).map(([x, y]) => [x, 1080 - top + map(y) / Y_SCALE]);
    sample(pts).forEach(({ x, y, passed }) => {
      passed.forEach(p => { d += `L${x - 0.5} ${p.toFixed(1)}`; });
      const jitter = (rnd() - 0.5) * 2;
      d += `${d ? 'L' : 'M'}${x} ${(y + jitter).toFixed(1)}`;
    });
  });
  add(svg, 'path', { class: `series series-${cls}`, d: d.replace(/^L/, 'M') });
}

const PANES = [
  { top: 1097, rows: [5, 65], series: [['bid3', 'bid'], ['ask1', 'ask']] },
  { top: 1224, rows: [51, 121], series: [['ask3', 'ask'], ['bid5', 'bid-deep']] },
  { top: 1375, rows: [54], series: [['bid8', 'bid'], ['ask3', 'ask', v => 720 + (v - 382) * 0.65]] },
  { top: 1477, rows: [15, 107], series: [['ask3', 'ask', v => 831 + (v - 382) * 0.48], ['bid3', 'bid', v => 944 + (v - 193) * 0.55]] },
  { top: 1589, rows: [31], series: [['ask5', 'ask-deep'], ['bid3', 'bid', v => 1168 + (v - 193) * 0.62]] },
  { top: 1709, rows: [43], series: [['ask5', 'ask', v => 1277 + (v - 1043) * 0.8], ['bid3', 'bid', v => 1415 + (v - 193) * 0.58]] }
];

PANES.forEach((pane, i) => {
  const svg = document.querySelector(`[data-pane="${i}"]`);
  grid(svg, pane.rows);
  pane.series.forEach(([name, cls, map]) => drawSeries(svg, name, cls, pane.top, map));
});
```
